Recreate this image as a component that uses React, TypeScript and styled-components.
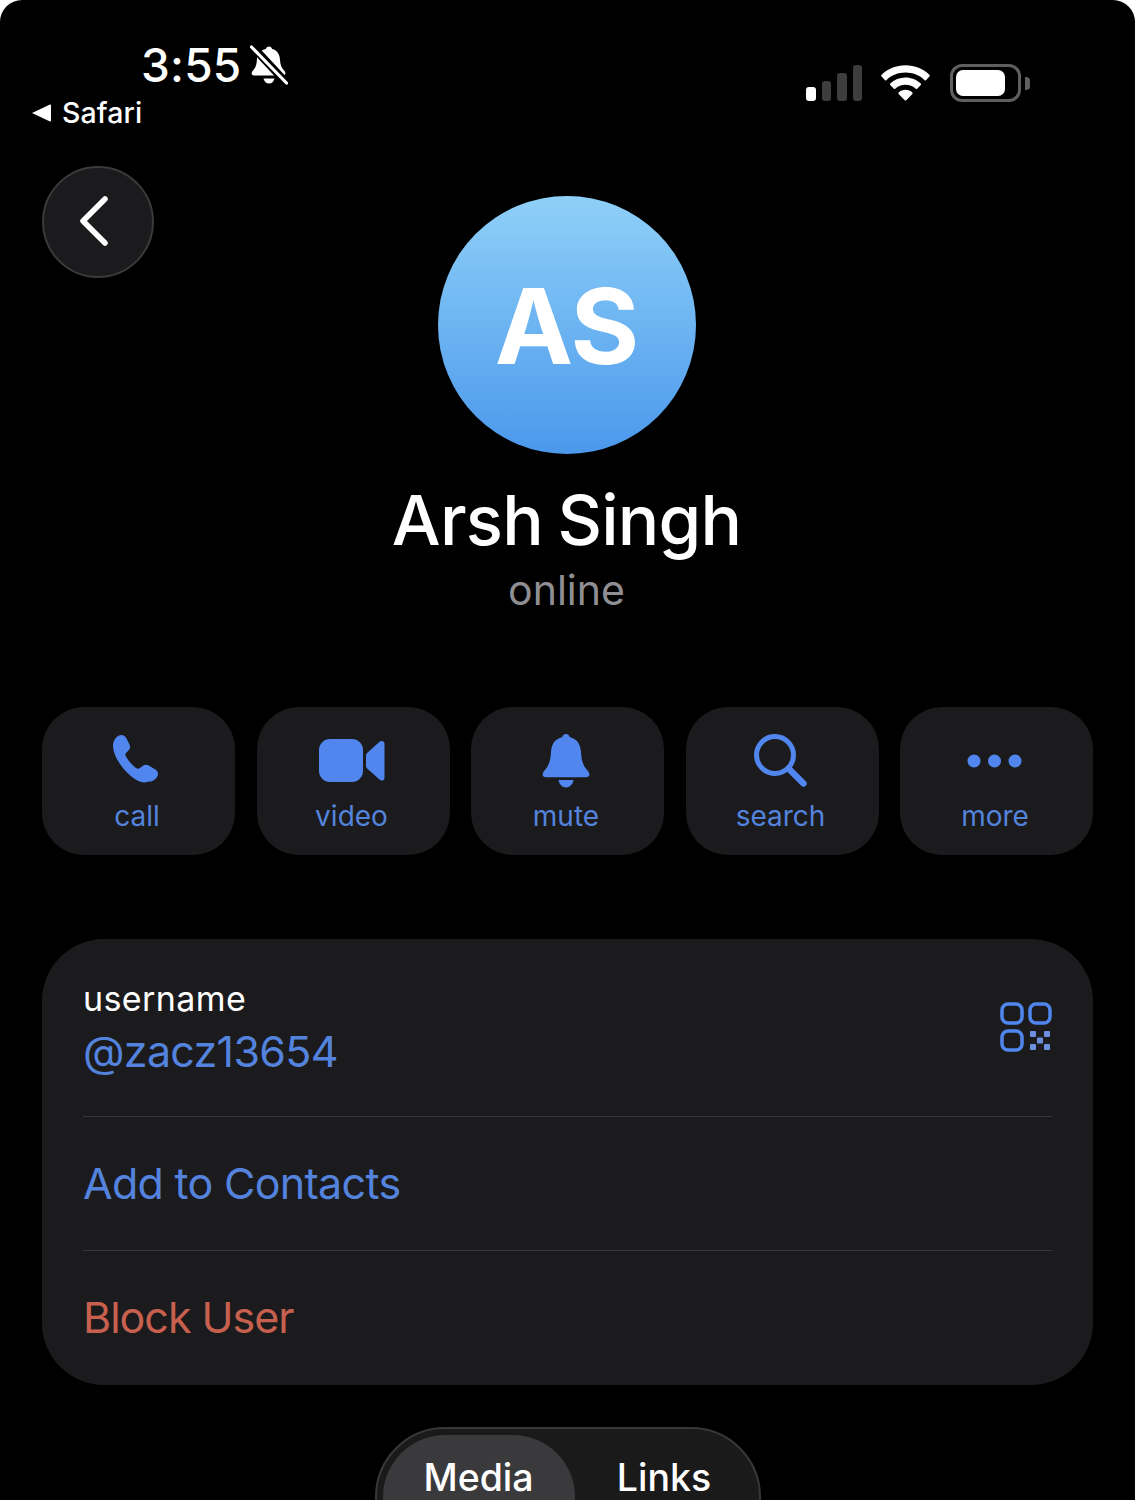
import React from "react"
import styled, { createGlobalStyle } from "styled-components"

const GlobalStyle = createGlobalStyle`
    html, body {
        margin: 0;
        padding: 0;
        background: #fff;
    }
    body {
        font-family: Inter, "Noto Sans", "Liberation Sans", sans-serif;
    }
`;

const blue = "#5483de";
const blueIcon = "#5086ee";
const surface = "#1b1b1d";

const Screen = styled.div`
    width: 1135px;
    height: 1500px;
    overflow: hidden;
    box-sizing: border-box;
    background: #000;
    border-radius: 22px 22px 0 0;
    color: #fff;
    padding: 0 42px;
`;

const StatusBar = styled.div`
    height: 166px;
    display: flex;
    justify-content: space-between;
    align-items: flex-start;
`;
const StatusLeft = styled.div`
    display: flex;
    flex-direction: column;
    padding-top: 38px;
`;
const Clock = styled.div`
    display: flex;
    align-items: center;
    gap: 9px;
    margin-left: 99px;
    font-size: 46px;
    line-height: 54px;
    font-weight: 500;
    letter-spacing: 0.2px;
`;
const BackToApp = styled.div`
    display: flex;
    align-items: center;
    gap: 11px;
    margin-left: -10px;
    font-size: 28.5px;
    line-height: 34px;
    font-weight: 500;
    letter-spacing: 0.1px;
    margin-top: 4px;
`;
const StatusRight = styled.div`
    display: flex;
    align-items: center;
    gap: 19px;
    margin-top: 64px;
    margin-right: 63px;
`;
const Signal = styled.div`
    display: flex;
    align-items: flex-end;
    gap: 6px;
    height: 36px;
`;
const SignalBar = styled.div<{ $h: number; $on?: boolean }>`
    width: 9.5px;
    height: ${(p) => p.$h}px;
    border-radius: 3px;
    background: ${(p) => (p.$on ? "#fff" : "#3d3d3d")};
`;
const Battery = styled.div`
    display: flex;
    align-items: center;
    gap: 4px;
    margin-left: 1px;
`;
const BatteryBody = styled.div`
    box-sizing: border-box;
    width: 71px;
    height: 38px;
    border: 3.5px solid #5f5f5f;
    border-radius: 12px;
    padding: 2.5px;
`;
const BatteryFill = styled.div`
    width: 49px;
    height: 26px;
    background: #fff;
    border-radius: 7px;
`;
const BatteryCap = styled.div`
    width: 5px;
    height: 13px;
    background: #5f5f5f;
    border-radius: 0 4px 4px 0;
`;

const Profile = styled.div`
    display: grid;
    grid-template-columns: 112px 1fr 112px;
    align-items: start;
`;
const BackButton = styled.button`
    width: 112px;
    height: 112px;
    box-sizing: border-box;
    border-radius: 50%;
    background: ${surface};
    border: 2px solid #3a3a3a;
    padding: 0;
    display: flex;
    align-items: center;
    justify-content: center;
`;
const Identity = styled.div`
    display: flex;
    flex-direction: column;
    align-items: center;
    padding: 30px 2px 0 0;
`;
const Avatar = styled.div`
    width: 258px;
    height: 258px;
    border-radius: 50%;
    background: linear-gradient(180deg, #8fd0f8 0%, #4b98ec 100%);
    display: flex;
    align-items: center;
    justify-content: center;
    font-size: 105px;
    font-weight: 700;
    letter-spacing: -1px;
`;
const Name = styled.h1`
    margin: 26px 0 0;
    font-size: 69px;
    line-height: 80px;
    font-weight: 500;
    letter-spacing: -0.8px;
    word-spacing: -3px;
`;
const Presence = styled.div`
    margin-top: 7px;
    font-size: 41px;
    line-height: 46px;
    color: #8f8f93;
`;

const Actions = styled.div`
    display: grid;
    grid-template-columns: repeat(5, 193px);
    justify-content: space-between;
    margin-top: 94px;
`;
const Action = styled.div`
    height: 148px;
    border-radius: 42px;
    background: ${surface};
    display: flex;
    flex-direction: column;
    align-items: center;
    justify-content: flex-end;
    padding: 0 3px 23px 0;
    box-sizing: border-box;
    color: ${blue};
    font-size: 28px;
    line-height: 32px;
`;
const ActionIcon = styled.div`
    height: 60px;
    width: 80px;
    display: flex;
    align-items: center;
    justify-content: center;
    margin-bottom: 9px;
`;

const Card = styled.div`
    margin-top: 84px;
    height: 446px;
    border-radius: 62px;
    background: ${surface};
    padding: 0 41px;
    box-sizing: border-box;
    display: flex;
    flex-direction: column;
`;
const UserRow = styled.div`
    height: 178px;
    box-sizing: border-box;
    padding-top: 38px;
    display: flex;
    justify-content: space-between;
    align-items: flex-start;
    border-bottom: 1px solid #38383a;
`;
const UserLabel = styled.div`
    font-size: 34px;
    line-height: 44px;
    letter-spacing: 0.4px;
`;
const UserName = styled.div`
    font-size: 43px;
    line-height: 54px;
    margin-top: 3px;
    letter-spacing: -0.7px;
    color: ${blue};
`;
const QrBox = styled.div`
    margin-top: 25px;
    display: flex;
`;
const LinkRow = styled.div<{ $danger?: boolean; $last?: boolean }>`
    height: 134px;
    box-sizing: border-box;
    padding-bottom: 2px;
    display: flex;
    align-items: center;
    font-size: 43px;
    letter-spacing: ${(p) => (p.$danger ? -1 : -0.7)}px;
    color: ${(p) => (p.$danger ? "#c8604f" : blue)};
    border-bottom: ${(p) => (p.$last ? "none" : "1px solid #38383a")};
`;

const TabsRow = styled.div`
    display: flex;
    justify-content: center;
    margin-top: 42px;
`;
const Tabs = styled.div`
    width: 386px;
    height: 146px;
    box-sizing: border-box;
    border-radius: 70px;
    background: #1a1a1b;
    border: 2px solid #38383a;
    padding: 6px 0 6px 6px;
    display: flex;
`;
const Tab = styled.div<{ $active?: boolean }>`
    flex: ${(p) => (p.$active ? "0 0 192px" : "1")};
    height: 130px;
    border-radius: 62px;
    background: ${(p) => (p.$active ? "#3a3a3c" : "transparent")};
    display: flex;
    justify-content: center;
    padding: 20px ${(p) => (p.$active ? 0 : 5)}px 0 0;
    box-sizing: border-box;
    font-size: 37.5px;
    line-height: 46px;
    font-weight: 500;
`;

const MutedBell = () => (
    <svg width="38" height="40" viewBox="0 0 38 40">
        <path d="M19 1.500c1.600 0 2.800 1 3.100 2.600 5 1.100 7.600 5.200 7.900 10.600.2 4.700 1.400 8 3.900 10.600 1.400 1.500 2 3 1 4.200-.7.900-1.800 1.100-3.200 1.100H5.300c-1.500 0-2.700-.3-3.300-1.200-.8-1.200-.2-2.600 1-3.900 2.600-2.700 3.600-6 3.900-10.600.2-5.300 3-9.600 9-10.800.3-1.600 1.500-2.600 3.100-2.600z" fill="#fff" />
        <path d="M13.500 33.500h11c-.7 3-2.800 5-5.500 5s-4.800-2-5.500-5z" fill="#fff" />
        <path d="M2 1l34 36.500" stroke="#000" strokeWidth="8" />
        <path d="M1.500 2L36.500 38" stroke="#fff" strokeWidth="3.200" strokeLinecap="round" />
    </svg>
)

const Wifi = () => (
    <svg width="49" height="36" viewBox="0 0 50 36" fill="#fff">
        <path d="M25 0c9.500 0 18.300 3.700 24.600 9.800.4.400.4 1 0 1.400l-3.700 3.900c-.4.400-1 .4-1.400 0C39.300 10.200 32.500 7.400 25 7.400S10.700 10.200 5.500 15.100c-.4.400-1 .4-1.400 0L.4 11.200c-.4-.4-.4-1 0-1.400C6.700 3.700 15.500 0 25 0z" />
        <path d="M25 12.500c6 0 11.500 2.300 15.600 6.100.4.400.4 1 0 1.400l-3.700 3.900c-.4.400-1 .4-1.400 0-2.800-2.500-6.500-4-10.500-4s-7.700 1.500-10.500 4c-.4.400-1 .4-1.400 0L9.400 20c-.4-.4-.4-1 0-1.400 4.100-3.800 9.600-6.100 15.600-6.100z" />
        <path d="M25 25c2.700 0 5.200 1 7 2.700.4.400.4 1 0 1.400l-6.200 6.500c-.4.400-1.200.4-1.600 0L18 29.100c-.4-.4-.4-1 0-1.400 1.800-1.700 4.300-2.700 7-2.700z" />
    </svg>
)

const Chevron = () => (
    <svg width="34" height="52" viewBox="0 0 34 52" style={{ marginLeft: -6, marginTop: -2 }}>
        <path d="M27 4L5 26l22 22" fill="none" stroke="#fff" strokeWidth="5.500" strokeLinecap="round" strokeLinejoin="round" />
    </svg>
)

const PhoneIcon = () => (
    <svg width="54" height="54" viewBox="-1 0 54 54" fill={blueIcon}>
        <path d="M8 1.500c3-1.500 6 0 7.500 3l3 6c1.200 2.500.5 4.500-1.500 6.500l-2 2c-.8 1-.8 2 0 3.500 2.500 4.500 6 8.500 10 11.500 1.500 1 2.800 1 4 0l2.500-2c2-1.500 4-1.800 6.300-.5l6.500 4c3 2 3.500 4.500 1.800 7.500-2 3.200-5.500 5-9.500 4.800C25 52.500 3 28 2 13c-.3-5 2-9.500 6-11.500z" />
    </svg>
)

const VideoIcon = () => (
    <svg width="66" height="44" viewBox="0 0 66 44" fill={blueIcon}>
        <rect x="0" y="0" width="44" height="43" rx="11" />
        <path d="M47 16.500c0-1 .4-1.800 1.100-2.500l12.700-11.400C62.500 1.200 65.500 1.900 65.500 4.500v34.400c0 2.700-3 3.300-4.700 1.800L48.100 29.500c-.7-.7-1.100-1.500-1.100-2.500z" />
    </svg>
)

const BellIcon = () => (
    <svg width="48" height="54" viewBox="0 0 48 54" fill={blueIcon}>
        <path d="M24 0c2 0 3.500 1.300 3.900 3.200 7.300 1.600 10.600 7.100 11.100 14.800.4 8 2 13 5.300 17 1.600 2 3.100 3.800 3.100 5.400 0 1.800-1.400 2.800-3.500 2.800H4.100C2 43.200.6 42.200.6 40.400c0-1.600 1.500-3.400 3.100-5.400C7 31 8.600 26 9 18c.5-7.700 3.800-13.200 11.100-14.800C20.500 1.300 22 0 24 0z" />
        <path d="M16.500 46h15c-.6 4.300-3.700 7.500-7.500 7.500s-6.900-3.200-7.500-7.500z" />
    </svg>
)

const SearchIcon = () => (
    <svg width="54" height="54" viewBox="0 0 54 54" fill="none" stroke={blueIcon} strokeLinecap="round">
        <circle cx="21" cy="21" r="18.500" strokeWidth="5" />
        <path d="M34.500 34.500L49.500 49.500" strokeWidth="6.500" />
    </svg>
)

const MoreIcon = () => (
    <svg width="56" height="14" viewBox="0 0 56 14" fill={blueIcon}>
        <circle cx="7" cy="7" r="6.500" />
        <circle cx="27.500" cy="7" r="6.500" />
        <circle cx="48" cy="7" r="6.500" />
    </svg>
)

const QrIcon = () => (
    <svg width="52" height="50" viewBox="0 0 52 50" fill="none" stroke={blueIcon} strokeWidth="3.500">
        <rect x="2" y="2" width="20" height="19" rx="6" />
        <rect x="30" y="2" width="20" height="19" rx="6" />
        <rect x="2" y="29" width="20" height="19" rx="6" />
        <g fill="#6c90dd" stroke="none">
            <rect x="30" y="29" width="6" height="6" rx="1" />
            <rect x="44" y="29" width="6" height="6" rx="1" />
            <rect x="37" y="35.500" width="6" height="6" rx="1" />
            <rect x="30" y="42" width="6" height="6" rx="1" />
            <rect x="44" y="42" width="6" height="6" rx="1" />
        </g>
    </svg>
)

const actions = [
    { label: "call", icon: <PhoneIcon /> },
    { label: "video", icon: <VideoIcon /> },
    { label: "mute", icon: <BellIcon /> },
    { label: "search", icon: <SearchIcon /> },
    { label: "more", icon: <MoreIcon /> },
]

const App = () => {
    return (
        <>
            <GlobalStyle />
            <Screen>
                <StatusBar>
                    <StatusLeft>
                        <Clock>
                            3:55
                            <MutedBell />
                        </Clock>
                        <BackToApp>
                            <svg width="19" height="18" viewBox="0 0 19 18">
                                <path d="M0 9L18 .5c.5 0 1 .3 1 1v15c0 .7-.5 1-1 1z" fill="#fff" />
                            </svg>
                            Safari
                        </BackToApp>
                    </StatusLeft>
                    <StatusRight>
                        <Signal>
                            <SignalBar $h={14} $on />
                            <SignalBar $h={20} />
                            <SignalBar $h={28} />
                            <SignalBar $h={36} />
                        </Signal>
                        <Wifi />
                        <Battery>
                            <BatteryBody>
                                <BatteryFill />
                            </BatteryBody>
                            <BatteryCap />
                        </Battery>
                    </StatusRight>
                </StatusBar>

                <Profile>
                    <BackButton type="button" aria-label="Back">
                        <Chevron />
                    </BackButton>
                    <Identity>
                        <Avatar>AS</Avatar>
                        <Name>Arsh Singh</Name>
                        <Presence>online</Presence>
                    </Identity>
                </Profile>

                <Actions>
                    {actions.map((a) => (
                        <Action key={a.label}>
                            <ActionIcon>{a.icon}</ActionIcon>
                            {a.label}
                        </Action>
                    ))}
                </Actions>

                <Card>
                    <UserRow>
                        <div>
                            <UserLabel>username</UserLabel>
                            <UserName>@zacz13654</UserName>
                        </div>
                        <QrBox>
                            <QrIcon />
                        </QrBox>
                    </UserRow>
                    <LinkRow>Add to Contacts</LinkRow>
                    <LinkRow $danger $last>Block User</LinkRow>
                </Card>

                <TabsRow>
                    <Tabs>
                        <Tab $active>Media</Tab>
                        <Tab>Links</Tab>
                    </Tabs>
                </TabsRow>
            </Screen>
        </>
    )
}

export default App
